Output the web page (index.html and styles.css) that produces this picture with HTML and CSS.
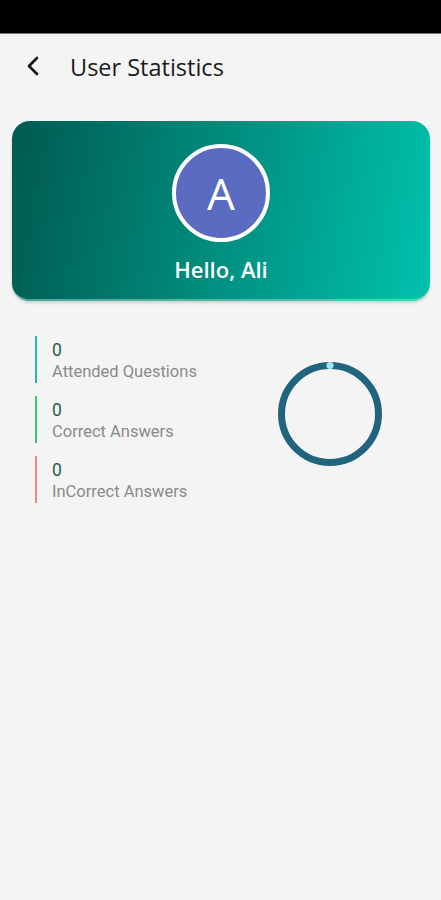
FILE: index.html
```html
<!DOCTYPE html>
<html lang="en">
<head>
    <meta charset="UTF-8">
    <meta name="viewport" content="width=device-width, initial-scale=1.0">
    <title>User Statistics</title>
    <link rel="stylesheet" href="styles.css">
</head>
<body>
    <div class="status-bar"></div>
    <header class="top-bar">
        <svg class="back" width="16" height="22" viewBox="0 0 16 22">
            <path d="M12 3 L4 11 L12 19" fill="none" stroke="#111" stroke-width="2.6" stroke-linecap="round" stroke-linejoin="round"/>
        </svg>
        <h1>User Statistics</h1>
    </header>

    <section class="user-card">
        <div class="avatar">A</div>
        <div class="hello">Hello, Ali</div>
    </section>

    <section class="stats">
        <div class="stat-list">
            <div class="stat stat-attended">
                <div class="num">0</div>
                <div class="label">Attended Questions</div>
            </div>
            <div class="stat stat-correct">
                <div class="num">0</div>
                <div class="label">Correct Answers</div>
            </div>
            <div class="stat stat-wrong">
                <div class="num">0</div>
                <div class="label">InCorrect Answers</div>
            </div>
        </div>
        <div class="chart">
            <svg width="106" height="106" viewBox="0 0 106 106">
                <circle cx="53" cy="53" r="48.5" fill="none" stroke="#21647e" stroke-width="7"/>
                <circle cx="53" cy="4.5" r="3.6" fill="#9fe3ee"/>
            </svg>
        </div>
    </section>
</body>
</html>
```

FILE: styles.css
```css
body { margin: 0; background-color: #F4F4F4; font-family: Roboto, "Liberation Sans", sans-serif; }
.status-bar { height: 33px; background: #000; border-bottom: 1px solid #777; }
.top-bar { display: flex; align-items: center; height: 66px; padding: 0 25px; }
.top-bar .back { display: block; margin-right: 29px; margin-top: -2px; }
.top-bar h1 { margin: 0; font-family: "Open Sans", sans-serif; font-weight: 400; font-size: 23.5px; color: #1a1a1a; }

.user-card { margin: 21px 11px 0 12px; padding: 23px 0 18px; border-radius: 18px; background: linear-gradient(100deg, #005a50 0%, #00796b 30%, #00a392 70%, #00c2ad 100%); box-shadow: inset 0 -4px 0 -2px rgba(140, 220, 200, 0.55), 0 2px 3px rgba(0, 0, 0, 0.15); display: flex; flex-direction: column; align-items: center; }
.avatar { width: 90px; height: 90px; border: 4px solid #FFF; border-radius: 50%; background: #5c6bc2; color: #FFF; font-family: "Open Sans", sans-serif; font-size: 44px; line-height: 90px; text-align: center; }
.hello { margin-top: 13px; color: #FFF; font-family: "Open Sans", sans-serif; font-weight: 600; font-size: 22px; line-height: 28px; }

.stats { display: flex; align-items: center; padding: 35px 0 0 35px; }
.stat-list { display: flex; flex-direction: column; gap: 13px; }
.stat { border-left: 2.5px solid #29b6ad; padding-left: 15px; height: 47px; display: flex; flex-direction: column; justify-content: flex-end; }
.stat-correct { border-color: #2fcf6a; }
.stat-wrong { border-color: #f28484; }
.num { font-size: 17.5px; line-height: 22px; color: #1f5e4d; }
.label { font-size: 16.5px; line-height: 22px; color: #8a8a8a; }
.chart { margin-left: auto; margin-right: 58px; margin-bottom: 12px; }
.chart svg { display: block; }
```
